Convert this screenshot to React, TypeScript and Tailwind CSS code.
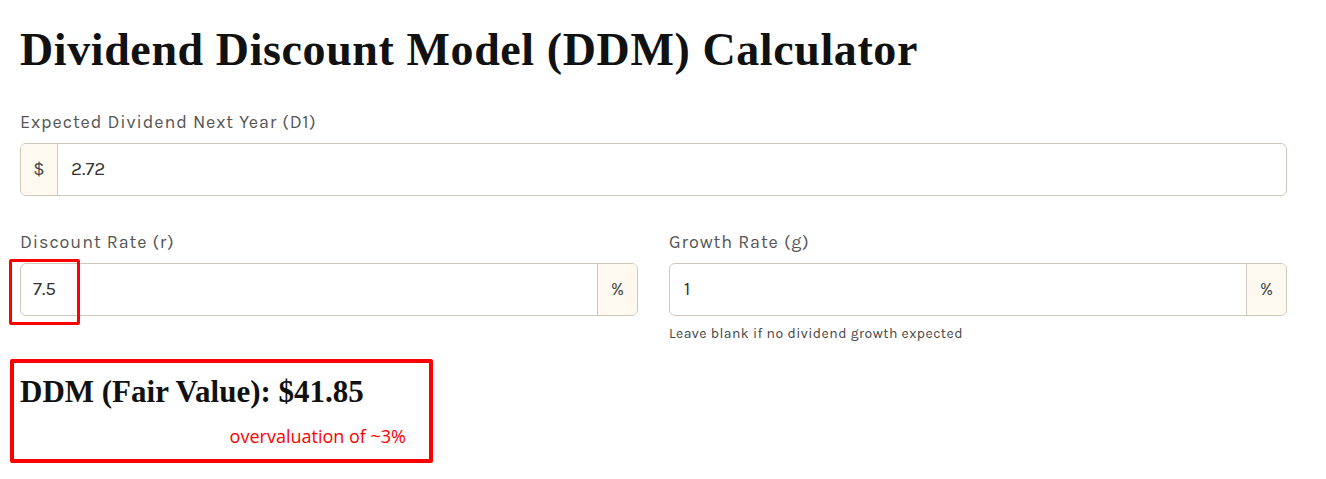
import React from 'react'

const labelCls = "block text-[18px] tracking-[0.9px] text-[#555] mb-[9px] leading-[23px]"
const inputBox = "flex h-[53px] border border-[#cfc9bc] rounded-[6px] overflow-hidden bg-white"
const addon = "flex items-center justify-center bg-[#fdf9f1] text-[18px] text-[#444]"

export default function App() {
    return (
        <div className="relative min-h-screen bg-white px-[20px] pt-[22px]" style={{ fontFamily: '"Karla", "Lato", "Open Sans", sans-serif' }}>
            <h1 className="text-[46px] leading-[56px] font-bold text-[#111] tracking-[0.6px]" style={{ fontFamily: '"Liberation Serif", serif' }}>
                Dividend Discount Model (DDM) Calculator
            </h1>

            <div className="mt-[33px] w-[1267px]">
                <label className={labelCls}>Expected Dividend Next Year (D1)</label>
                <div className={inputBox}>
                    <div className={addon + " w-[37px] border-r border-[#cfc9bc]"}>$</div>
                    <div className="flex items-center pl-[13px] text-[19px] text-[#333]">2.72</div>
                </div>
            </div>

            <div className="mt-[35px] grid grid-cols-2 gap-[31px] w-[1267px]">
                <div>
                    <label className={labelCls}>Discount Rate (r)</label>
                    <div className={inputBox}>
                        <div className="flex-1 flex items-center pl-[12px] text-[19px] text-[#333]">7.5</div>
                        <div className={addon + " w-[40px] border-l border-[#cfc9bc]"}>%</div>
                    </div>
                </div>
                <div>
                    <label className={labelCls}>Growth Rate (g)</label>
                    <div className={inputBox}>
                        <div className="flex-1 flex items-center pl-[14px] text-[19px] text-[#333]">1</div>
                        <div className={addon + " w-[40px] border-l border-[#cfc9bc]"}>%</div>
                    </div>
                    <p className="mt-[8px] text-[14px] tracking-[0.45px] leading-[19px] text-[#444]">Leave blank if no dividend growth expected</p>
                </div>
            </div>

            <div className="mt-[31px]">
                <div className="text-[31px] leading-[36px] font-bold text-[#111]" style={{ fontFamily: '"Liberation Serif", serif' }}>
                    DDM (Fair Value): $41.85
                </div>
                <div className="w-[386px] text-right mt-[13px] text-[18px] leading-[26px] text-[#ff0000]" style={{ fontFamily: '"Open Sans", sans-serif' }}>
                    overvaluation of ~3%
                </div>
            </div>

            <div className="absolute left-[9px] top-[259px] w-[71px] h-[66px] border-[3px] border-[#ff0000] rounded-[2px]" />
            <div className="absolute left-[10px] top-[359px] w-[423px] h-[104px] border-[4px] border-[#ff0000] rounded-[2px]" />
        </div>
    )
}
